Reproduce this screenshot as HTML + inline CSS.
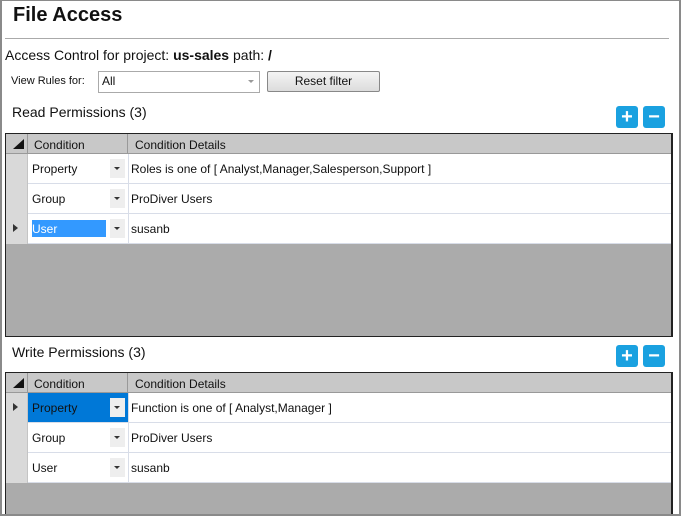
<!DOCTYPE html>
<html style="overflow:hidden"><head><style>
html,body{margin:0;width:681px;height:516px;overflow:hidden}
body{background:#fff;font-family:"Liberation Sans",sans-serif;color:#111;position:relative}
.a{position:absolute}
.grid{position:absolute;left:5px;width:665px;border:1px solid #222;border-right:2px solid #222;background:#ababab;overflow:hidden}
.hdr{position:absolute;left:0;top:0;width:665px;height:19px;background:#c8c8c8;border-bottom:1px solid #999;font-size:12px}
.row{position:absolute;left:0;width:665px;height:29px;background:#fff;border-bottom:1px solid #d8dde8;font-size:12px}
.rh{position:absolute;left:0;top:0;width:21px;height:30px;background:#d9d9d9;border-right:1px solid #c4c4c4}
.c1{position:absolute;left:22px;top:0;width:100px;height:29px;border-right:1px solid #d8dde8}
.c1 span{position:absolute;left:4px;top:8px}
.dd{position:absolute;left:82px;top:5px;width:15px;height:19px;background:#eee}
.dd:after{content:"";position:absolute;left:4px;top:8px;border:3px solid transparent;border-top:3px solid #333;border-bottom:0}
.c2{position:absolute;left:125px;top:8px}
.btn{position:absolute;width:22px;height:22px;background:#1aa1e0;border-radius:3px;color:#fff;font:bold 20px/22px "Liberation Sans",sans-serif;text-align:center}
.tri{position:absolute;left:7px;top:10px;border:4px solid transparent;border-left:5px solid #333;border-right:0}
</style></head><body>
<div class="a" style="left:0;top:0;width:681px;height:1px;background:#8a8a8a"></div>
<div class="a" style="left:0;top:0;width:2px;height:516px;background:#8a8a8a"></div>
<div class="a" style="left:13px;top:4px;font-size:20px;font-weight:bold">File Access</div>
<div class="a" style="left:5px;top:38px;width:664px;height:1px;background:#aaa"></div>
<div class="a" style="left:5px;top:47px;font-size:14px">Access Control for project: <b>us-sales</b> path: <b>/</b></div>
<div class="a" style="left:11px;top:75px;font-size:11px">View Rules for:</div>
<div class="a" style="left:98px;top:71px;width:160px;height:20px;border:1px solid #aaa;font-size:12px"><span style="position:absolute;left:3px;top:2px">All</span><span style="position:absolute;right:5px;top:8px;border:3px solid transparent;border-top:3px solid #999;border-bottom:0"></span></div>
<div class="a" style="left:267px;top:71px;width:111px;height:19px;border:1px solid #888;border-radius:2px;background:linear-gradient(#f4f4f4,#dcdcdc);font-size:12px;text-align:center;line-height:19px">Reset filter</div>
<div class="a" style="left:12px;top:104px;font-size:14px">Read Permissions (3)</div>
<div class="btn" style="left:616px;top:106px">+</div><div class="btn" style="left:643px;top:106px">−</div>
<div class="grid" style="top:133px;height:202px">
<div class="hdr"><div class="a" style="left:7px;top:5px;border-left:11px solid transparent;border-bottom:10px solid #111;width:0;height:0"></div><div class="a" style="left:21px;top:0;width:1px;height:19px;background:#999"></div><div class="a" style="left:28px;top:4px">Condition</div><div class="a" style="left:121px;top:0;width:1px;height:19px;background:#999"></div><div class="a" style="left:129px;top:4px">Condition Details</div></div>
<div class="row" style="top:20px"><div class="rh"></div><div class="c1"><span>Property</span><div class="dd"></div></div><div class="c2">Roles is one of [ Analyst,Manager,Salesperson,Support ]</div></div>
<div class="row" style="top:50px"><div class="rh"></div><div class="c1"><span>Group</span><div class="dd"></div></div><div class="c2">ProDiver Users</div></div>
<div class="row" style="top:80px"><div class="rh"><div class="tri"></div></div><div class="c1"><div class="a" style="left:4px;top:6px;width:74px;height:17px;background:#3399ff"></div><span style="color:#fff">User</span><div class="dd"></div></div><div class="c2">susanb</div></div>
</div>
<div class="a" style="left:12px;top:344px;font-size:14px">Write Permissions (3)</div>
<div class="btn" style="left:616px;top:345px">+</div><div class="btn" style="left:643px;top:345px">−</div>
<div class="grid" style="top:372px;height:141px;border-bottom:0">
<div class="hdr"><div class="a" style="left:7px;top:5px;border-left:11px solid transparent;border-bottom:10px solid #111;width:0;height:0"></div><div class="a" style="left:21px;top:0;width:1px;height:19px;background:#999"></div><div class="a" style="left:28px;top:4px">Condition</div><div class="a" style="left:121px;top:0;width:1px;height:19px;background:#999"></div><div class="a" style="left:129px;top:4px">Condition Details</div></div>
<div class="row" style="top:20px"><div class="rh"><div class="tri"></div></div><div class="c1" style="background:#0078d7"><span style="color:#111">Property</span><div class="dd"></div></div><div class="c2">Function is one of [ Analyst,Manager ]</div></div>
<div class="row" style="top:50px"><div class="rh"></div><div class="c1"><span>Group</span><div class="dd"></div></div><div class="c2">ProDiver Users</div></div>
<div class="row" style="top:80px"><div class="rh"></div><div class="c1"><span>User</span><div class="dd"></div></div><div class="c2">susanb</div></div>
</div>
<div class="a" style="left:0;top:514px;width:681px;height:2px;background:#8a8a8a"></div>
<div class="a" style="left:679px;top:0;width:2px;height:516px;background:#8a8a8a"></div>
</body></html>
